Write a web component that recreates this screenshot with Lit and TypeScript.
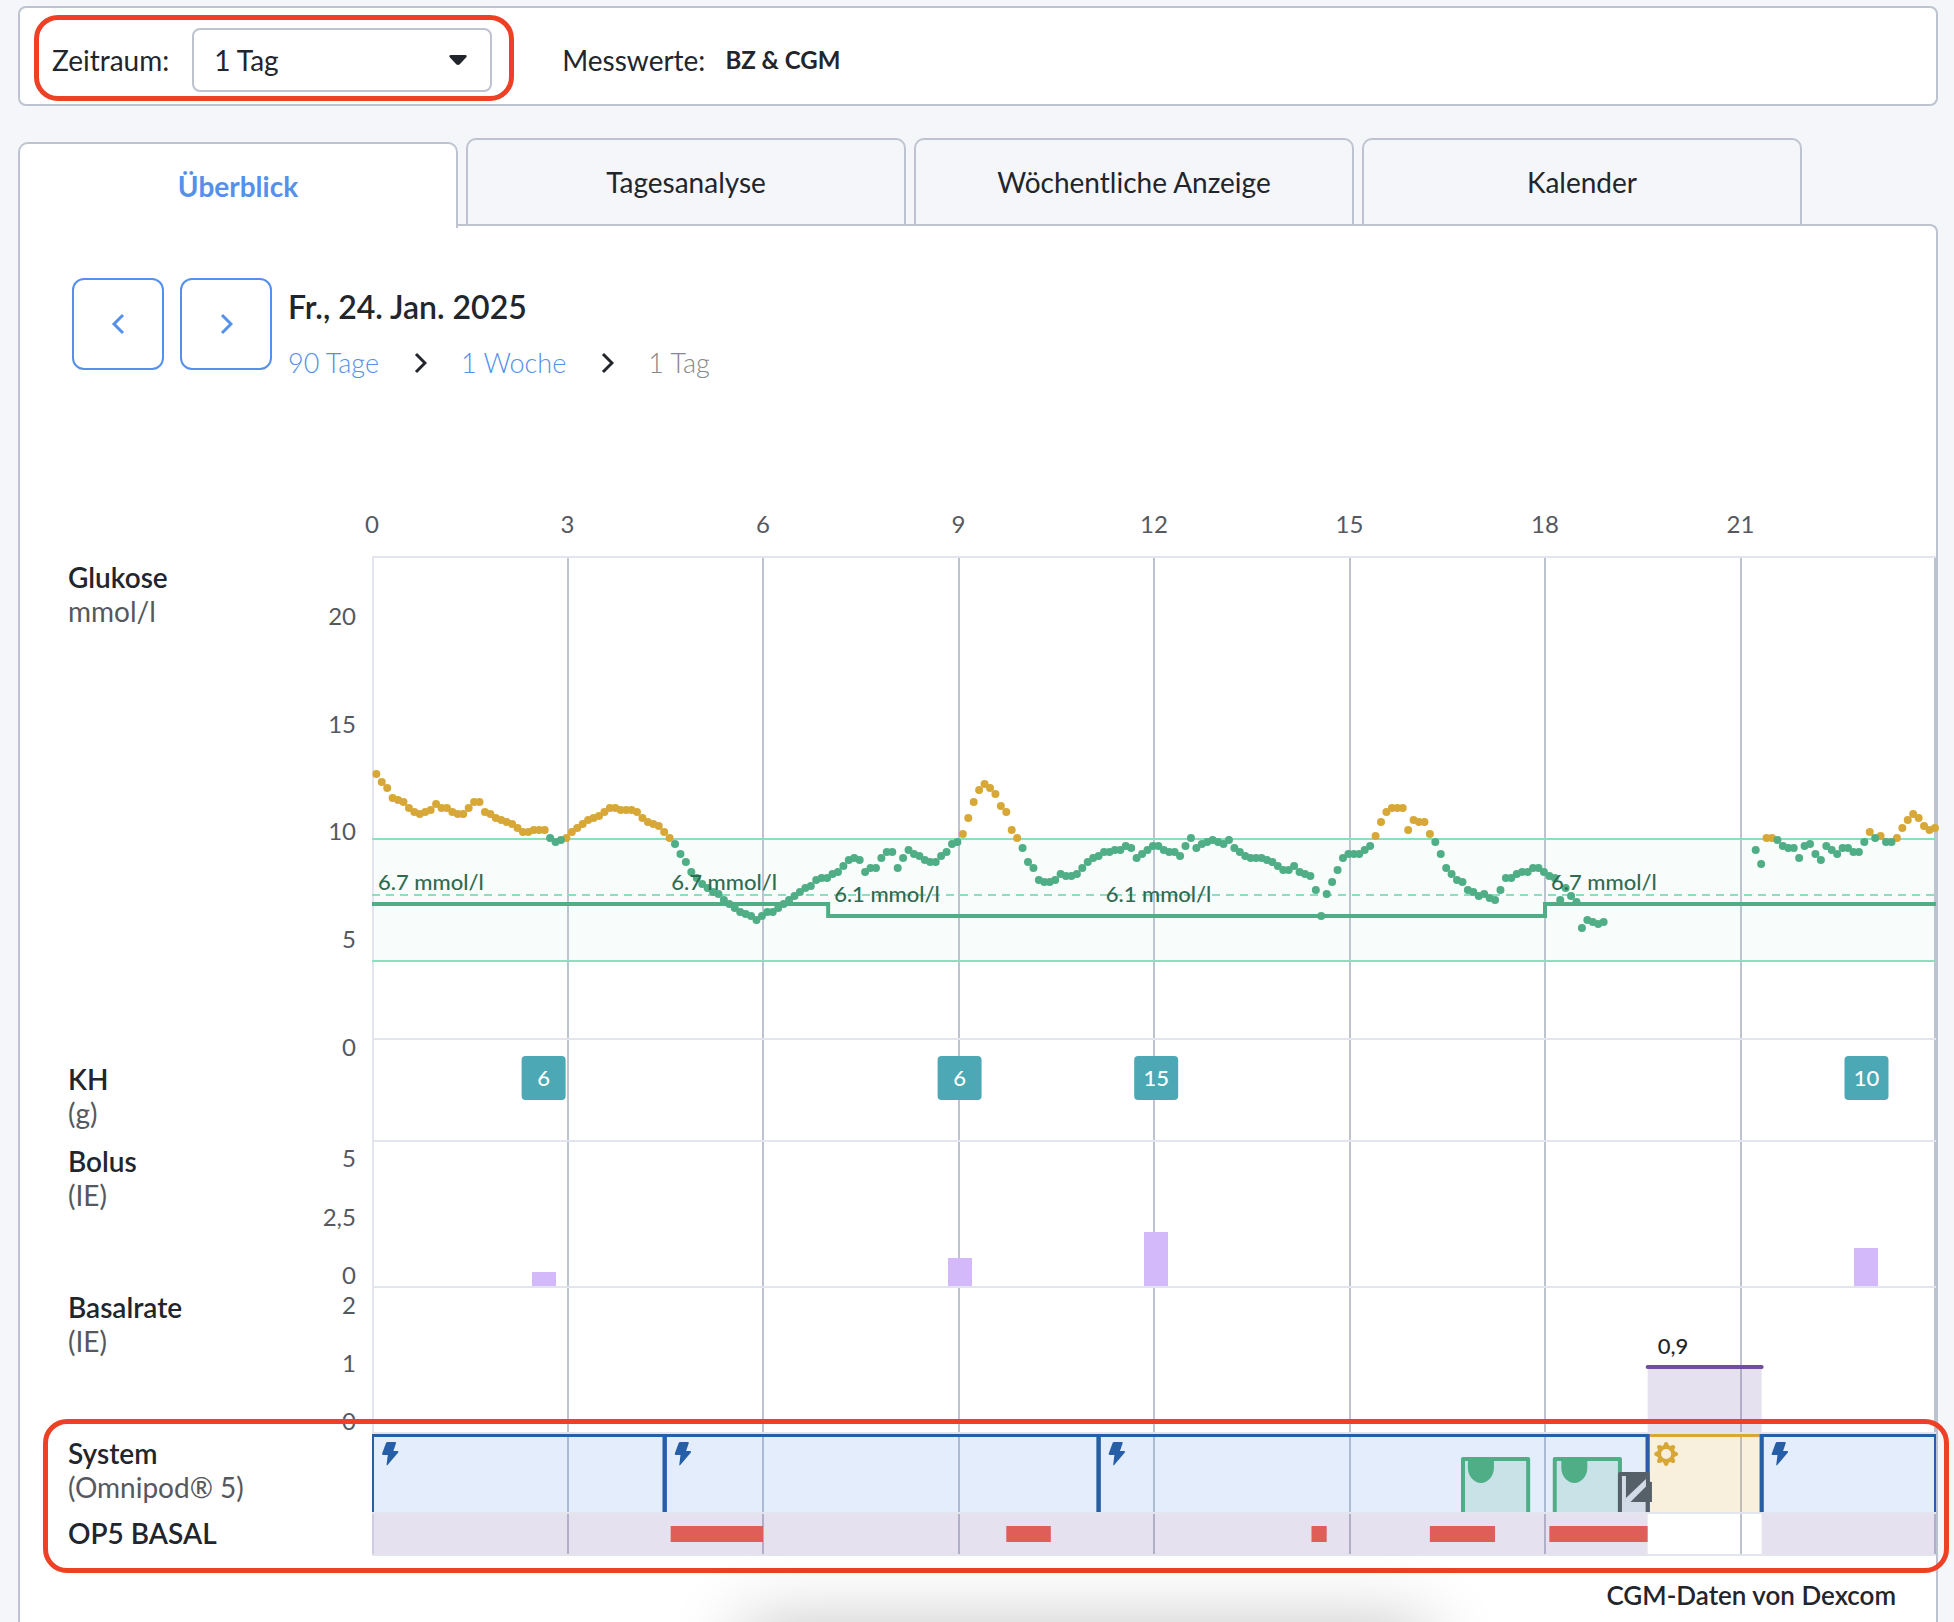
import { LitElement, html, svg, css } from "lit";
import { customElement, property, state } from "lit/decorators.js";
import { classMap } from "lit/directives/class-map.js";

const DAY = 1440;
const pct = (minutes: number) => `${(minutes / DAY) * 100}%`;

/** CGM readings every five minutes, in tenths of mmol/l, as [first slot, values]. */
const READINGS: [number, number[]][] = [
  [0, [
    132, 128, 125, 120, 119, 118, 115, 113, 112, 113, 114, 117, 115, 115, 113, 112, 112, 115, 118, 118,
    113, 112, 110, 109, 108, 107, 105, 103, 103, 104, 104, 104, 100, 98, 99, 100.5, 103, 105, 107, 109,
    110, 111, 113, 115, 115, 114, 114, 114, 113, 110, 108, 107, 106, 103, 100.5, 97, 92, 88, 83, 80,
    77, 75, 73, 72, 69, 67, 65, 63, 62, 61, 59, 61, 63, 63, 65, 67,
    69, 71, 73, 75, 76, 79, 80, 80, 82, 83, 86, 89, 90, 89, 83, 85, 85, 90, 93, 93,
    85, 90, 94, 92, 91, 89, 88, 88, 91, 93, 97, 98, 102, 110, 118, 124, 127, 125, 122, 116,
    113, 104, 100.5, 95, 88, 85, 79, 78, 78, 79, 82, 81, 81, 82, 85, 88, 90, 91, 93, 93,
    94, 94, 96, 95, 90, 92, 94, 96, 96, 94, 93, 93, 91, 96, 100, 95, 97, 98, 99, 98,
    97, 99, 95, 93, 91, 90, 90, 90, 89, 88, 86, 84, 84, 86, 83, 82, 81, 74, 61, 72,
    78, 84, 90, 92, 92, 92, 94, 96, 101, 108, 113, 115, 115, 115, 104, 109, 108, 108, 102, 98,
    92, 85, 82, 79, 78, 74, 73, 71, 72, 70, 69, 74, 80, 80, 82, 83, 83, 85, 85, 83,
    81, 80, 69, 75, 71, 68, 55, 59, 58, 57, 58,
  ]],
  [254, [
    94, 87, 100.5, 100.5, 99, 96, 95, 95, 90, 96, 97, 92, 89, 96, 94, 92, 95, 95, 93, 93,
    98, 103, 100, 101, 98, 98, 100.5, 105, 109, 112, 110, 106, 104, 105,
  ]],
];

const TARGET_LABELS = [
  { at: 0, value: "6.7", y: 332 },
  { at: 270, value: "6.7", y: 332 },
  { at: 420, value: "6.1", y: 344 },
  { at: 670, value: "6.1", y: 344 },
  { at: 1080, value: "6.7", y: 332 },
];

const MEALS = [
  { at: 158, carbs: 6, bolus: 14 },
  { at: 541, carbs: 6, bolus: 28 },
  { at: 722, carbs: 15, bolus: 54 },
  { at: 1376, carbs: 10, bolus: 38 },
];

const AUTO_MODE: [number, number][] = [[0, 269.5], [269.5, 669], [669, 1174.5], [1279.5, 1440]];
const ACTIVITY: [number, number][] = [[1004.5, 1064.5], [1089, 1149]];
const ACTIVITY_MARKS = [1021, 1107];
const DELIVERY: [number, number][] = [[0, 1174.5], [1279.5, 1440]];
const PAUSES: [number, number][] = [[275, 360], [584, 625], [865, 879], [974, 1034], [1084, 1174.5]];

const grid = () => svg`
  <g class="grid">
    <rect class="edge" x="0" y="0" width="2" height="100%"></rect>
    ${[1, 2, 3, 4, 5, 6, 7].map((i) => svg`
      <rect x=${pct(i * 180)} y="0" width="2" height="100%" transform="translate(-1 0)"></rect>`)}
    <rect x="100%" y="0" width="2" height="100%" transform="translate(-2 0)"></rect>
  </g>`;

const span = (cls: string, [from, to]: [number, number], y: number, height: number) => svg`
  <rect class=${cls} x=${pct(from)} y=${y} width=${pct(to - from)} height=${height}></rect>`;

@customElement("day-chart")
export class DayChart extends LitElement {
  static styles = css`
    :host { display: block; }
    .row { display: grid; grid-template-columns: 224px 80px minmax(0, 1fr); }
    .label { padding-top: 4px; font-size: 28px; line-height: 34px; color: #55585e; white-space: nowrap; }
    .label b { display: block; font-weight: 600; color: #22252b; }
    .carbs .label { padding-top: 24px; }
    .axis { padding-right: 16px; }
    svg { display: block; width: 100%; overflow: visible; }
    .plot { border-top: 2px solid #e3e5ee; }
    .hours .plot { border-top-color: transparent; }
    .basal-op5 .plot { border-bottom: 2px solid #e3e5ee; }
    .system .plot svg, .basal-op5 .plot svg { overflow: hidden; }
    .system .plot svg.mark { overflow: visible; }
    .h50 { height: 48px; }
    .h480 { height: 480px; }
    .h100 { height: 100px; }
    .h144 { height: 144px; }
    .h78 { height: 78px; }
    .h40 { height: 40px; }
    text { font-family: Lato, sans-serif; font-size: 24px; fill: #55585e; }
    .end { text-anchor: end; }
    .mid { text-anchor: middle; }
    .grid rect { fill: #bec3d0; shape-rendering: crispEdges; }
    .grid .edge { fill: #e3e5ee; }
    .range { fill: rgba(79, 174, 134, 0.04); }
    .limit, .middle { stroke: #8cdfbe; stroke-width: 2; }
    .middle { stroke-dasharray: 8 6; }
    .target { stroke: #4fae86; stroke-width: 4; }
    .target-label { font-size: 22px; font-weight: 500; fill: #2f6b52; }
    .ok { fill: #4fae86; }
    .high { fill: #d7a837; }
    .badge { fill: #4da8b5; }
    .badge-label { font-size: 22px; font-weight: 500; fill: #fff; }
    .dose { fill: #d3b9fa; shape-rendering: crispEdges; }
    .rate { fill: rgba(114, 90, 162, 0.18); }
    .rate-line { stroke: #724e9e; stroke-width: 4; stroke-linecap: round; }
    .rate-label { font-size: 22px; font-weight: 500; fill: #22252b; }
    .auto { fill: rgba(82, 144, 234, 0.16); stroke: #265ea8; stroke-width: 4; }
    .manual { fill: rgba(215, 168, 55, 0.17); stroke: #d7a837; stroke-width: 4; }
    .active { fill: rgba(79, 174, 134, 0.17); stroke: #4fae86; stroke-width: 4; stroke-linejoin: round; }
    .lost { fill: #d3dbe8; stroke: #566069; stroke-width: 4; stroke-linejoin: round; }
    .bolt { fill: #265ea8; }
    .slate { fill: #566069; }
    .stripe { fill: #d3dbe8; }
    .pause { fill: #e05e59; }
    .marked { position: relative; }
    .marked::after {
      content: ""; position: absolute; inset: -13px -13px -17px -25px;
      border: 5px solid #ee4025; border-radius: 24px; pointer-events: none;
    }
  `;

  private axis(height: string, marks: [string, number][]) {
    return html`<div class="axis"><svg class=${height} aria-hidden="true">
      ${marks.map(([t, y]) => svg`<text class="end" x="100%" y=${y}>${t}</text>`)}
    </svg></div>`;
  }

  private dots(high: boolean) {
    return READINGS.flatMap(([first, values]) =>
      values.map((v, i) =>
        v > 100 === high
          ? svg`<circle class=${high ? "high" : "ok"} cx=${pct(4 + (first + i) * 5)}
              cy=${280 + (100 - Math.floor(v)) * 2} r="4"></circle>`
          : null));
  }

  private glucose() {
    return svg`
      <rect class="range" x="0" y="281" width="100%" height="122"></rect>
      ${grid()}
      <line class="limit" x1="0" x2="100%" y1="281" y2="281"></line>
      <line class="limit" x1="0" x2="100%" y1="403" y2="403"></line>
      <line class="middle" x1="0" x2="100%" y1="337" y2="337"></line>
      <line class="target" x1="0" x2=${pct(420)} y1="346" y2="346"></line>
      <line class="target" x1=${pct(420)} x2=${pct(420)} y1="344" y2="360"></line>
      <line class="target" x1=${pct(420)} x2=${pct(1080)} y1="358" y2="358"></line>
      <line class="target" x1=${pct(1080)} x2=${pct(1080)} y1="344" y2="360"></line>
      <line class="target" x1=${pct(1080)} x2="100%" y1="346" y2="346"></line>
      ${this.dots(true)}${this.dots(false)}
      ${TARGET_LABELS.map((t) => svg`
        <text class="target-label" x=${pct(t.at)} dx="6" y=${t.y}>${t.value} mmol/l</text>`)}`;
  }

  private system() {
    return svg`
      ${grid()}
      ${span("manual", [1174.5, 1279.5], 1, 100)}
      ${AUTO_MODE.map((s) => span("auto", s, 1, 100))}
      ${AUTO_MODE.map(([from]) => svg`
        <svg x=${pct(from)} y="0" width="40" height="40">
          <path class="bolt" d="M15.5 8h7.6q1.3 0 .9 1.2L21.4 17h4.2q1.3.3.6 1.6L15.6 31q-1 1-1-.6l1.2-9.4h-4.6q-1.5 0-1.1-1.4L14 9q.4-1 1.5-1z"></path>
        </svg>`)}
      <svg x=${pct(1174.5)} y="0" width="40" height="40">
        <g transform="translate(18.5 20)">
          ${[0, 45, 90, 135, 180, 225, 270, 315].map((a) => svg`
            <path class="high" transform="rotate(${a})" d="M-3.5-7-1.8-11Q0-13 1.8-11L3.5-7z"></path>`)}
          <path class="high" fill-rule="evenodd"
            d="M0-9A9 9 0 1 1 0 9 9 9 0 1 1 0-9zM0-5A5 5 0 1 0 0 5 5 5 0 1 0 0-5z"></path>
        </g>
      </svg>
      ${ACTIVITY.map((s) => span("active", s, 25, 80))}
      ${ACTIVITY_MARKS.map((at) => svg`
        <svg x=${pct(at)} y="23" width="1" height="40" class="mark">
          <path class="ok" transform="translate(-13 0)" d="M0 0h26v11c0 8-6 15-13 15S0 19 0 11z"></path>
        </svg>`)}
      ${span("lost", [1149, 1174.5], 40, 80)}
      <svg x=${pct(1149)} y="42" width="40" height="40">
        <path class="slate" d="M6 0h20v5l6 1v20H6z"></path>
        <path class="stripe" d="M6 22v4h4.5L26 10.5V3z"></path>
      </svg>`;
  }

  render() {
    return html`
      <div class="row hours">
        <div></div><div></div>
        <div class="plot"><svg class="h50" role="img" aria-label="Uhrzeit">
          ${[0, 3, 6, 9, 12, 15, 18, 21].map((h) => svg`<text class="mid" x=${pct(h * 60)} y="25">${h}</text>`)}
        </svg></div>
      </div>
      <div class="row">
        <div class="label"><b>Glukose</b>mmol/l</div>
        ${this.axis("h480", [["20", 69], ["15", 177], ["10", 284], ["5", 392], ["0", 500]])}
        <div class="plot"><svg class="h480">${this.glucose()}</svg></div>
      </div>
      <div class="row carbs">
        <div class="label"><b>KH</b>(g)</div><div></div>
        <div class="plot"><svg class="h100">${grid()}
          ${MEALS.map((m) => svg`<svg x=${pct(m.at)} y="16" width="1" height="44">
            <rect class="badge" x="-22" width="44" height="44" rx="4"></rect>
            <text class="badge-label mid" y="30">${m.carbs}</text></svg>`)}
        </svg></div>
      </div>
      <div class="row">
        <div class="label"><b>Bolus</b>(IE)</div>
        ${this.axis("h144", [["5", 27], ["2,5", 86], ["0", 144]])}
        <div class="plot"><svg class="h144">${grid()}
          ${MEALS.map((m) => svg`<rect class="dose" transform="translate(-12 0)" x=${pct(m.at)}
            y=${144 - m.bolus} width="24" height=${m.bolus}></rect>`)}
        </svg></div>
      </div>
      <div class="row">
        <div class="label"><b>Basalrate</b>(IE)</div>
        ${this.axis("h144", [["2", 28], ["1", 86], ["0", 144]])}
        <div class="plot"><svg class="h144">${grid()}
          ${span("rate", [1174.5, 1279.5], 79, 65)}
          <line class="rate-line" x1=${pct(1174.5)} x2=${pct(1279.5)} y1="79" y2="79"></line>
          <text class="rate-label" x=${pct(1174.5)} dx="10" y="66">0,9</text>
        </svg></div>
      </div>
      <div class="marked">
        <div class="row system">
          <div class="label"><b>System</b>(Omnipod® 5)</div><div></div>
          <div class="plot"><svg class="h78">${this.system()}</svg></div>
        </div>
        <div class="row basal-op5">
          <div class="label"><b>OP5 BASAL</b></div><div></div>
          <div class="plot"><svg class="h40">${grid()}
            ${DELIVERY.map((s) => span("rate", s, 0, 40))}
            ${PAUSES.map((s) => span("pause", s, 12, 16))}
          </svg></div>
        </div>
      </div>`;
  }
}

@customElement("app-root")
export class AppRoot extends LitElement {
  @property() date = "Fr., 24. Jan. 2025";
  @state() private tab = 0;
  private tabs = ["Überblick", "Tagesanalyse", "Wöchentliche Anzeige", "Kalender"];

  static styles = css`
    :host { display: block; font-family: Lato, sans-serif; font-size: 28px; line-height: 34px; color: #22252b; }
    * { box-sizing: border-box; }
    .page {
      position: relative; display: flex; flex-direction: column; min-height: 100vh;
      padding: 6px 16px 0 18px; background: #f4f6fa; overflow: hidden;
    }
    .toolbar {
      display: flex; align-items: center; gap: 70px; padding: 20px 32px 12px;
      background: #fff; border: 2px solid #bec3d0; border-radius: 8px;
    }
    .period { position: relative; display: flex; align-items: center; gap: 23px; }
    .period::after {
      content: ""; position: absolute; inset: -13px -22px -9px -18px;
      border: 5px solid #ee4025; border-radius: 24px; pointer-events: none;
    }
    .picker { position: relative; display: flex; }
    select {
      appearance: none; width: 300px; height: 64px; padding: 0 20px; font: inherit; color: inherit;
      background: #fff; border: 2px solid #bec3d0; border-radius: 8px;
    }
    .caret { position: absolute; right: 24px; top: 26px; width: 20px; height: 12px; pointer-events: none; }
    .source { display: flex; align-items: center; gap: 20px; }
    .source b { font-size: 24px; font-weight: 700; }
    .tabs { position: relative; z-index: 1; display: flex; gap: 8px; height: 86px; margin-top: 32px; }
    .tab {
      flex: 0 1 440px; height: 86px; padding: 0; font: inherit; color: inherit; background: #f4f6fa;
      border: 2px solid #bec3d0; border-bottom: 0; border-radius: 10px 10px 0 0;
    }
    .tab.on { margin-top: 4px; font-weight: 700; color: #5590ea; background: #fff; }
    .panel {
      flex: 1; padding: 52px 0 12px 48px; background: #fff;
      border: 2px solid #bec3d0; border-bottom: 0; border-radius: 0 8px 0 0;
    }
    .head { display: flex; align-items: flex-start; gap: 16px; padding-left: 4px; margin-bottom: 126px; }
    .step {
      display: grid; place-items: center; width: 92px; height: 92px; padding: 0;
      background: #fff; border: 2px solid #5590ea; border-radius: 12px;
    }
    .step svg, .crumbs svg { width: 14px; height: 22px; fill: none; stroke: #5590ea; stroke-width: 3; }
    .crumbs svg { stroke: #22252b; }
    h1 { margin: 9px 0 19px; font-size: 32px; line-height: 40px; font-weight: 600; }
    .crumbs { display: flex; align-items: center; gap: 34px; font-size: 27px; font-weight: 300; color: #85888c; }
    a { color: #5590ea; text-decoration: none; }
    .credit { margin: 22px 40px 0 0; font-size: 26px; font-weight: 600; text-align: right; }
    .shade {
      position: absolute; left: 38%; right: 27%; top: 100%; height: 200px;
      box-shadow: 0 0 72px rgba(0, 0, 0, 0.24); pointer-events: none;
    }
  `;

  render() {
    const right = html`<svg viewBox="0 0 14 22" aria-hidden="true"><path d="M3 2l9 9-9 9"></path></svg>`;
    return html`
      <div class="page">
        <section class="toolbar">
          <div class="period">
            <label for="period">Zeitraum:</label>
            <div class="picker">
              <select id="period"><option>1 Tag</option><option>1 Woche</option><option>90 Tage</option></select>
              <svg class="caret" viewBox="0 0 20 12" aria-hidden="true"><path fill="#22252b" d="M2.5 1h15q2 .5 1 2l-6.500 7q-2 2-4 0L1.500 3q-1-1.500 1-2z"></path></svg>
            </div>
          </div>
          <div class="source"><span>Messwerte:</span><b>BZ &amp; CGM</b></div>
        </section>
        <div class="tabs" role="tablist">
          ${this.tabs.map((t, i) => html`
            <button role="tab" aria-selected=${i === this.tab} class=${classMap({ tab: true, on: i === this.tab })}
              @click=${() => (this.tab = i)}>${t}</button>`)}
        </div>
        <main class="panel">
          <header class="head">
            <button class="step" aria-label="Vorheriger Tag"><svg viewBox="0 0 14 22" aria-hidden="true"><path d="M12 2l-9 9 9 9"></path></svg></button>
            <button class="step" aria-label="Nächster Tag">${right}</button>
            <div>
              <h1>${this.date}</h1>
              <nav class="crumbs"><a href="#90-tage">90 Tage</a>${right}<a href="#1-woche">1 Woche</a>${right}<span>1 Tag</span></nav>
            </div>
          </header>
          <day-chart></day-chart>
          <p class="credit">CGM-Daten von Dexcom</p>
        </main>
        <div class="shade"></div>
      </div>`;
  }
}
